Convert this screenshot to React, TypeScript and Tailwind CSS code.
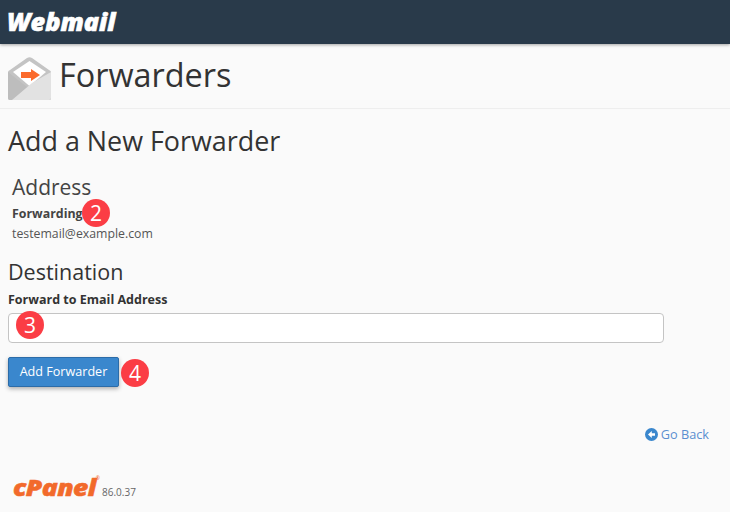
export default function App() {
  const badge = "absolute flex h-[28px] w-[28px] items-center justify-center rounded-full bg-[#fb3d45] text-[21px] leading-none text-white";
  return (
    <div className="relative h-[512px] w-[730px] overflow-hidden bg-[#fafafa] font-['Open_Sans',sans-serif] text-[#333]">
      <header className="flex h-[44px] items-center bg-[#293a4a] pl-[7px] shadow-[0_1px_3px_rgba(0,0,0,0.35)]">
        <span className="inline-block origin-left scale-x-[1.05] text-[24px] font-extrabold italic leading-none text-white [-webkit-text-stroke:0.6px_white]">Webmail</span>
      </header>
      <div className="flex h-[65px] items-center gap-[8px] border-b border-[#eeeeee] pl-[8px]">
        <svg width="43" height="43" viewBox="0 0 43 43" className="mt-[5px] shrink-0">
          <path d="M0 15 Q0 14 2 13 L19 1 Q21.5 -0.5 24 1 L41 13 Q43 14 43 15 L43 41 Q43 43 41 43 L2 43 Q0 43 0 41 Z" fill="#c4c4c4" />
          <path d="M5 15 L21.5 4 L38 15 L21.5 29 Z" fill="#ffffff" />
          <path d="M0 15 L21.5 32 L43 15 L43 41 Q43 43 41 43 L2 43 Q0 43 0 41 Z" fill="#bdbdbd" />
          <path d="M43 15 L43 41 Q43 43 41 43 L4 43 L24 26 Z" fill="#e2e2e2" />
          <path d="M13 15 H23 V12 L32 18 L23 24 V21 H13 Z" fill="#fb6a2c" />
        </svg>
        <h1 className="mb-[3px] text-[32.4px] font-normal leading-none">Forwarders</h1>
      </div>
      <main className="px-[8px]">
        <h2 className="mt-[16px] text-[26.9px] font-normal leading-[32px]">Add a New Forwarder</h2>
        <section className="mt-[17px] pl-[4px]">
          <h3 className="text-[21px] font-normal leading-[26px] text-[#444]">Address</h3>
          <div className="mt-[5px] text-[12.4px] font-bold leading-[17px] text-[#444]">Forwarding</div>
          <div className="mt-[3px] text-[12.3px] leading-[18px] text-[#555]">testemail@example.com</div>
        </section>
        <section className="mt-[16px]">
          <h3 className="text-[21.5px] font-normal leading-[26px] text-[#333]">Destination</h3>
          <label className="mt-[6px] block text-[12.5px] font-bold leading-[17px]">Forward to Email Address</label>
          <input className="mt-[5px] block h-[30px] w-[656px] rounded-[4px] border border-[#c4c4c4] bg-white" />
          <button className="mt-[14px] block h-[30px] w-[111px] rounded-[2px] border border-[#2c6ca8] bg-[#3a87cd] text-[12.6px] leading-none text-white shadow-[0_2px_4px_rgba(0,0,0,0.3)]">Add Forwarder</button>
        </section>
        <div className="mt-[38px] flex items-center justify-end gap-[3px] pr-[13px] text-[12.7px] leading-[18px] text-[#5a8fd0]">
          <svg width="13" height="13" viewBox="0 0 13 13">
            <circle cx="6.5" cy="6.5" r="6.5" fill="#3a87cd" />
            <path d="M3 6.5 L6.8 3 V5.2 H10 V7.8 H6.8 V10 Z" fill="#fff" />
          </svg>
          <span>Go Back</span>
        </div>
        <footer className="mt-[32px] flex items-end gap-[5px] pl-[5px]">
          <span className="relative inline-block w-[84px]">
            <span className="inline-block origin-left scale-x-[1.15] whitespace-nowrap text-[23px] font-extrabold italic leading-[24px] tracking-[-0.5px] text-[#f26a2b] [-webkit-text-stroke:0.5px_#f26a2b]">cPanel</span>
            <span className="absolute right-[-3px] top-[1px] text-[5px] leading-none text-[#f26a2b]">®</span>
          </span>
          <span className="pb-[3px] text-[10px] leading-[14px] text-[#666]">86.0.37</span>
        </footer>
      </main>
      <span className={badge + " left-[82px] top-[199px]"}>2</span>
      <span className={badge + " left-[16px] top-[311px]"}>3</span>
      <span className={badge + " left-[121px] top-[359px]"}>4</span>
    </div>
  );
}
